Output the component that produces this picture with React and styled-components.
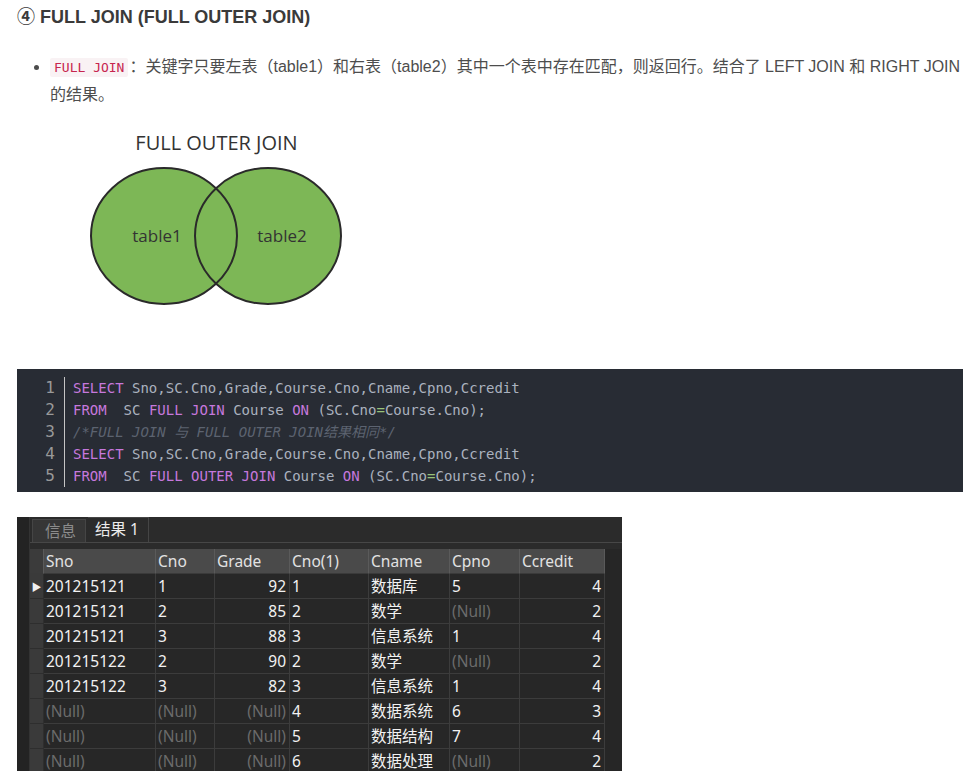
import React from 'react';
import styled, { createGlobalStyle } from 'styled-components';

const GlobalStyle = createGlobalStyle`
  html, body {
    margin: 0;
    padding: 0;
    background: #fff;
    overflow-x: hidden;
  }
  body {
    font-family: "Liberation Sans", "Noto Sans CJK SC", sans-serif;
    color: #4d4d4d;
  }
`;

const Page = styled.div`
  width: 946px;
  padding: 5px 0 40px 17px;
`;

const Heading = styled.h4`
  margin: 0;
  font-size: 18px;
  line-height: 24px;
  font-weight: 700;
  color: #3a3a3a;
`;

const List = styled.ul`
  margin: 24px 0 0;
  padding-left: 33px;
  font-size: 16px;
  line-height: 27px;
  color: #4d4d4d;
`;

const InlineCode = styled.code`
  font-family: "DejaVu Sans Mono", "Liberation Mono", monospace;
  font-size: 13px;
  color: #c7254e;
  background: #f9f2f4;
  padding: 2px 4px;
  margin-right: 1px;
  border-radius: 2px;
`;

const Figure = styled.figure`
  margin: 23px 0 0 68px;
  width: 260px;
  display: flex;
  flex-direction: column;
  align-items: center;
`;

const FigureTitle = styled.div`
  font-family: "Open Sans", sans-serif;
  font-size: 20px;
  line-height: 24px;
  color: #333;
  margin-left: 3px;
`;

const Venn = styled.svg`
  display: block;
  margin-top: 10px;
`;

const CodeBlock = styled.pre`
  margin: 60px 0 0;
  padding: 8px 0 5px;
  background: #282c34;
  display: flex;
  font-family: "DejaVu Sans Mono", "Noto Sans CJK SC", monospace;
  font-size: 14px;
  line-height: 22px;
  color: #abb2bf;
`;

const Gutter = styled.div`
  width: 38px;
  padding-right: 9px;
  text-align: right;
  border-right: 1px solid #c5c5c5;
  color: #999;
  font-size: 16px;
`;

const Lines = styled.div`
  padding-left: 8px;
  white-space: pre;
`;

const Kw = styled.span`
  color: #c678dd;
`;

const Op = styled.span`
  color: #98c379;
`;

const Comment = styled.span`
  color: #5c6370;
  font-style: italic;
`;

const ResultFrame = styled.div`
  margin-top: 25px;
  width: 605px;
  background: #232323;
  padding-left: 12px;
  box-sizing: border-box;
  font-family: "Noto Sans", "Noto Sans CJK SC", sans-serif;
  font-size: 15.5px;
`;

const Panel = styled.div`
  background: #2b2b2b;
  border-left: 1px solid #333;
`;

const TabBar = styled.div`
  display: flex;
  align-items: flex-end;
  height: 25px;
  padding-left: 2px;
  border-bottom: 1px solid #474747;
`;

const Tab = styled.div`
  height: ${p => (p.$active ? '25px' : '23px')};
  line-height: 23px;
  padding: ${p => (p.$active ? '0 9px 0 7px' : '0 9px 0 12px')};
  margin-right: 2px;
  color: ${p => (p.$active ? '#ececec' : '#8c8c8c')};
  background: ${p => (p.$active ? '#2b2b2b' : '#363636')};
  border: 1px solid #454545;
  border-bottom: none;
  border-left: ${p => (p.$active ? 'none' : '1px solid #454545')};
  box-sizing: border-box;
`;

const Grid = styled.div`
  margin-top: 6px;
  display: grid;
  grid-template-columns: 14px 112px 59px 75px 79px 81px 70px 85px 1fr;
`;

const HeadCell = styled.div`
  height: 24px;
  line-height: 24px;
  padding: 0 2px;
  background: ${p => (p.$marker ? '#3b3b3b' : '#4a4a4a')};
  color: #e2e2e2;
  border-right: 1px solid #5a5a5a;
  border-bottom: 1px solid #3a3a3a;
  white-space: nowrap;
  overflow: hidden;
`;

const Cell = styled.div`
  height: 24px;
  line-height: 24px;
  padding: 0 3px 0 2px;
  background: #272727;
  color: ${p => (p.$null ? '#6b6b6b' : '#f2f2f2')};
  text-align: ${p => (p.$right ? 'right' : 'left')};
  border-right: 1px solid #3c3c3c;
  border-bottom: 1px solid #3c3c3c;
  white-space: nowrap;
  overflow: hidden;
`;

const MarkerCell = styled.div`
  height: 24px;
  background: #3a3a3a;
  border-right: 1px solid #2e2e2e;
  border-bottom: 1px solid #2e2e2e;
  display: flex;
  align-items: center;
  justify-content: center;
  color: #f0f0f0;
  font-size: 10px;
`;

const Gap = styled.div`
  background: #262626;
`;

const columns = ['Sno', 'Cno', 'Grade', 'Cno(1)', 'Cname', 'Cpno', 'Ccredit'];
const rightAligned = [2, 6];

const rows = [
  ['201215121', '1', '92', '1', '数据库', '5', '4'],
  ['201215121', '2', '85', '2', '数学', null, '2'],
  ['201215121', '3', '88', '3', '信息系统', '1', '4'],
  ['201215122', '2', '90', '2', '数学', null, '2'],
  ['201215122', '3', '82', '3', '信息系统', '1', '4'],
  [null, null, null, '4', '数据系统', '6', '3'],
  [null, null, null, '5', '数据结构', '7', '4'],
  [null, null, null, '6', '数据处理', null, '2'],
];

const selectLine = (
  <>
    <Kw>SELECT</Kw> Sno,SC.Cno,Grade,Course.Cno,Cname,Cpno,Ccredit
  </>
);

const fromLine = join => (
  <>
    <Kw>FROM</Kw>  SC <Kw>{join}</Kw> Course <Kw>ON</Kw> (SC.Cno<Op>=</Op>Course.Cno);
  </>
);

const codeLines = [
  selectLine,
  fromLine('FULL JOIN'),
  <Comment>/*FULL JOIN 与 FULL OUTER JOIN结果相同*/</Comment>,
  selectLine,
  fromLine('FULL OUTER JOIN'),
];

const App = () => (
  <Page>
    <GlobalStyle />
    <Heading>④ FULL JOIN (FULL OUTER JOIN)</Heading>
    <List>
      <li>
        <InlineCode>FULL JOIN</InlineCode>：关键字只要左表（table1）和右表（table2）其中一个表中存在匹配，则返回行。结合了 LEFT JOIN 和 RIGHT JOIN 的结果。
      </li>
    </List>

    <Figure>
      <FigureTitle>FULL OUTER JOIN</FigureTitle>
      <Venn width="260" height="144" viewBox="0 0 260 144">
        <ellipse cx="79" cy="71" rx="73" ry="68" fill="#7db756" />
        <ellipse cx="183" cy="71" rx="73" ry="68" fill="#7db756" />
        <ellipse cx="79" cy="71" rx="73" ry="68" fill="none" stroke="#2a2a2a" strokeWidth="2" />
        <ellipse cx="183" cy="71" rx="73" ry="68" fill="none" stroke="#2a2a2a" strokeWidth="2" />
        <text x="72" y="77" textAnchor="middle" fontFamily="Open Sans, sans-serif" fontSize="17" fill="#333">table1</text>
        <text x="197" y="77" textAnchor="middle" fontFamily="Open Sans, sans-serif" fontSize="17" fill="#333">table2</text>
      </Venn>
    </Figure>

    <CodeBlock>
      <Gutter>
        {codeLines.map((_, i) => (
          <div key={i}>{i + 1}</div>
        ))}
      </Gutter>
      <Lines>
        {codeLines.map((line, i) => (
          <div key={i}>{line}</div>
        ))}
      </Lines>
    </CodeBlock>

    <ResultFrame>
      <Panel>
        <TabBar>
          <Tab>信息</Tab>
          <Tab $active>结果 1</Tab>
        </TabBar>
        <Grid>
          <HeadCell $marker />
          {columns.map(c => (
            <HeadCell key={c}>{c}</HeadCell>
          ))}
          <Gap />
          {rows.map((row, r) => (
            <React.Fragment key={r}>
              <MarkerCell>{r === 0 ? '▶' : ''}</MarkerCell>
              {row.map((v, c) => (
                <Cell key={c} $null={v === null} $right={rightAligned.includes(c)}>
                  {v === null ? '(Null)' : v}
                </Cell>
              ))}
              <Gap />
            </React.Fragment>
          ))}
        </Grid>
      </Panel>
    </ResultFrame>
  </Page>
);

export default App;
